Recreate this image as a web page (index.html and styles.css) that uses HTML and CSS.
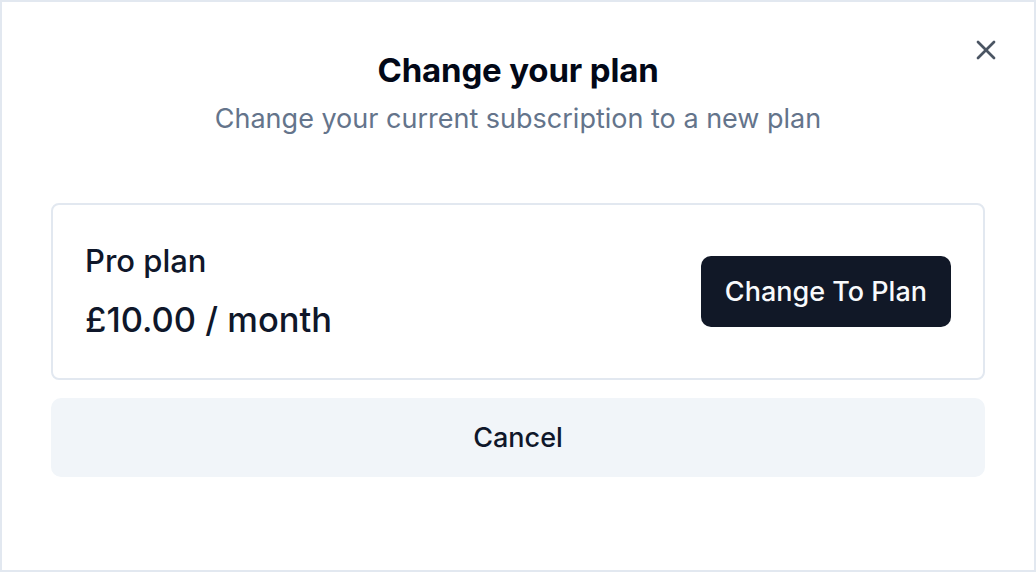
FILE: index.html
```html
<!DOCTYPE html>
<html lang="en">
  <head>
    <meta charset="UTF-8" />
    <meta name="viewport" content="width=device-width, initial-scale=1.0" />
    <title>Change your plan</title>
    <link rel="stylesheet" href="styles.css">
  </head>
  <body>
    <div class="dialog">
      <button class="close" type="button" aria-label="Close">
        <svg width="32" height="32" viewBox="0 0 24 24" fill="none" stroke="currentColor" stroke-width="2" stroke-linecap="round" stroke-linejoin="round">
          <path d="M18 6 6 18" />
          <path d="m6 6 12 12" />
        </svg>
      </button>
      <div class="dialog-header">
        <h2 class="title">Change your plan</h2>
        <p class="subtitle">Change your current subscription to a new plan</p>
      </div>
      <div class="plan-card">
        <div class="plan-info">
          <div class="plan-name">Pro plan</div>
          <div class="plan-price">£10.00 / month</div>
        </div>
        <button type="button" class="btn-primary">Change To Plan</button>
      </div>
      <button type="button" class="btn-cancel">Cancel</button>
    </div>
  </body>
</html>
```
FILE: styles.css
```css
* {
  box-sizing: border-box;
}
body {
  margin: 0;
  font-family: Inter, "Noto Sans", sans-serif;
  color: #0f172a;
  background: #fff;
}
.dialog {
  position: relative;
  width: 1036px;
  height: 572px;
  border: 2px solid #e2e8f0;
  background: #fff;
  padding: 50px 49px;
  display: flex;
  flex-direction: column;
}
.close {
  position: absolute;
  top: 32px;
  right: 32px;
  width: 32px;
  height: 32px;
  padding: 0;
  border: none;
  background: none;
  color: #4b5563;
  cursor: pointer;
}
.close svg {
  display: block;
}
.dialog-header {
  text-align: center;
}
.title {
  margin: 0;
  font-size: 33px;
  line-height: 36px;
  font-weight: 700;
  letter-spacing: -0.005em;
  color: #020817;
}
.subtitle {
  margin: 15px 0 0;
  font-size: 27px;
  line-height: 32px;
  color: #64748b;
}
.plan-card {
  margin-top: 68px;
  border: 2px solid #e2e8f0;
  border-radius: 8px;
  padding: 38px 32px;
  display: flex;
  justify-content: space-between;
  align-items: center;
}
.plan-info {
  display: flex;
  flex-direction: column;
  gap: 21px;
}
.plan-name {
  font-size: 31px;
  line-height: 36px;
  font-weight: 500;
}
.plan-price {
  font-size: 34.5px;
  line-height: 40px;
  font-weight: 500;
}
.btn-primary {
  height: 71px;
  padding: 0 24px;
  border: none;
  border-radius: 10px;
  background: #111827;
  color: #f8fafc;
  font-family: inherit;
  font-size: 27px;
  font-weight: 500;
  cursor: pointer;
}
.btn-cancel {
  margin-top: 18px;
  height: 79px;
  border: none;
  border-radius: 10px;
  background: #f1f5f9;
  color: #0f172a;
  font-family: inherit;
  font-size: 27px;
  font-weight: 500;
  cursor: pointer;
}
```
